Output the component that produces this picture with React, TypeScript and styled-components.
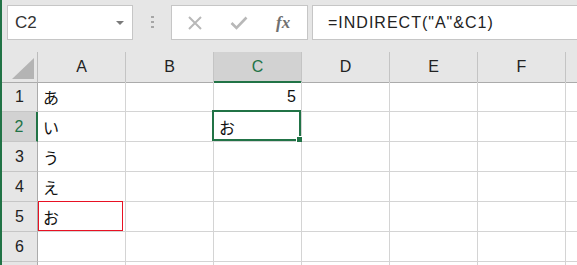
import React from "react";
import styled, { createGlobalStyle } from "styled-components";

const Global = createGlobalStyle`
  html, body { margin: 0; padding: 0; }
  body {
    width: 577px; height: 265px; overflow: hidden;
    background: #e6e6e6;
    font-family: "Liberation Sans", "Noto Sans CJK JP", sans-serif;
  }
`;

const GREEN = "#217346";

const Frame = styled.div`
  display: flex;
  width: 577px;
  height: 265px;
  overflow: hidden;
`;

const Strip = styled.div`
  width: 2px;
  flex: none;
  background: ${GREEN};
`;

const Main = styled.div`
  flex: 1;
  display: flex;
  flex-direction: column;
  min-width: 0;
`;

const Toolbar = styled.div`
  display: flex;
  align-items: flex-start;
  height: 52px;
  padding: 5px 0 0 5px;
  box-sizing: border-box;
  flex: none;
`;

const NameBox = styled.div`
  width: 126px;
  height: 35px;
  box-sizing: border-box;
  background: #fff;
  border: 1px solid #c6c6c6;
  display: flex;
  align-items: center;
  padding-left: 7px;
  position: relative;
  font-size: 17px;
  color: #333;
`;

const Caret = styled.span`
  position: absolute;
  right: 8px;
  top: 15px;
  width: 0;
  height: 0;
  border-left: 4px solid transparent;
  border-right: 4px solid transparent;
  border-top: 4px solid #7a7a7a;
`;

const Grip = styled.div`
  width: 38px;
  height: 35px;
  display: flex;
  flex-direction: column;
  align-items: center;
  gap: 3px;
  padding-top: 11px;
  box-sizing: border-box;
  flex: none;
`;

const Dot = styled.span`
  width: 3px;
  height: 2px;
  background: #a6a6a6;
`;

const FxBox = styled.div`
  width: 137px;
  height: 35px;
  box-sizing: border-box;
  background: #fff;
  border: 1px solid #c6c6c6;
  display: flex;
  align-items: center;
  padding-left: 15px;
  flex: none;
`;

const IconSlot = styled.span<{ $ml: number }>`
  display: flex;
  margin-left: ${(p) => p.$ml}px;
`;

const FxLabel = styled.span`
  font-family: "Liberation Serif", serif;
  font-style: italic;
  font-weight: bold;
  font-size: 17px;
  color: #707070;
  margin-left: 28px;
`;

const FormulaBox = styled.div`
  flex: 1;
  margin-left: 4px;
  height: 35px;
  box-sizing: border-box;
  background: #fff;
  border: 1px solid #c6c6c6;
  border-right: none;
  display: flex;
  align-items: center;
  padding-left: 15px;
  font-size: 16px;
  letter-spacing: 1px;
  color: #222;
  white-space: nowrap;
`;

const Sheet = styled.div`
  display: grid;
  grid-template-columns: 36px repeat(7, 88px);
  grid-auto-rows: 30px;
  background: #fff;
  flex: 1;
`;

const Corner = styled.div`
  height: 31px;
  box-sizing: border-box;
  background: #e6e6e6;
  border-right: 1px solid #bcbcbc;
  border-bottom: 1px solid #ababab;
  position: relative;
`;

const Triangle = styled.span`
  position: absolute;
  left: 10px;
  top: 6px;
  width: 0;
  height: 0;
  border-left: 22px solid transparent;
  border-bottom: 21px solid #b4b4b4;
`;

const ColHead = styled.div<{ $sel?: boolean }>`
  height: 31px;
  box-sizing: border-box;
  background: ${(p) => (p.$sel ? "#d2d2d2" : "#e6e6e6")};
  border-right: 1px solid #c4c4c4;
  border-bottom: ${(p) => (p.$sel ? `2px solid ${GREEN}` : "1px solid #ababab")};
  display: flex;
  align-items: center;
  justify-content: center;
  font-size: 16px;
  color: ${(p) => (p.$sel ? GREEN : "#222")};
  padding-top: ${(p) => (p.$sel ? "1px" : "0")};
`;

const RowHead = styled.div<{ $sel?: boolean }>`
  box-sizing: border-box;
  background: ${(p) => (p.$sel ? "#d2d2d2" : "#e6e6e6")};
  border-right: ${(p) => (p.$sel ? `2px solid ${GREEN}` : "1px solid #ababab")};
  border-bottom: 1px solid #c6c6c6;
  display: flex;
  align-items: center;
  justify-content: center;
  font-size: 16px;
  color: ${(p) => (p.$sel ? GREEN : "#222")};
`;

const Cell = styled.div<{ $right?: boolean }>`
  box-sizing: border-box;
  position: relative;
  border-right: 1px solid #d4d4d4;
  border-bottom: 1px solid #d4d4d4;
  display: flex;
  align-items: center;
  justify-content: ${(p) => (p.$right ? "flex-end" : "flex-start")};
  padding: 0 5px 0 5px;
  font-size: 16px;
  font-family: "Liberation Sans", "Noto Sans CJK JP", sans-serif;
  color: #111;
`;

const Active = styled.span`
  position: absolute;
  top: -2px;
  left: -2px;
  right: 0;
  bottom: 0;
  border: 2px solid ${GREEN};
  pointer-events: none;
`;

const Handle = styled.span`
  position: absolute;
  right: -3px;
  bottom: -3px;
  width: 5px;
  height: 5px;
  background: ${GREEN};
  border: 1px solid #fff;
  border-right: none;
  border-bottom: none;
`;

const Marked = styled.span`
  position: absolute;
  top: -1px;
  left: 0;
  width: 85px;
  bottom: 0;
  border: 1px solid #e81123;
  box-sizing: border-box;
  pointer-events: none;
`;

const cols = ["A", "B", "C", "D", "E", "F", ""];
const rows: Record<number, Record<number, string>> = {
  1: { 0: "あ", 2: "5" },
  2: { 0: "い", 2: "お" },
  3: { 0: "う" },
  4: { 0: "え" },
  5: { 0: "お" },
};

export default function App() {
  return (
    <>
      <Global />
      <Frame>
        <Strip />
        <Main>
          <Toolbar>
            <NameBox>
              C2
              <Caret />
            </NameBox>
            <Grip>
              <Dot />
              <Dot />
              <Dot />
            </Grip>
            <FxBox>
              <IconSlot $ml={0}>
                <svg width="16" height="16" viewBox="0 0 16 16">
                  <path d="M2 2 L14 14 M14 2 L2 14" stroke="#b8b8b8" strokeWidth="2" fill="none" />
                </svg>
              </IconSlot>
              <IconSlot $ml={27}>
                <svg width="18" height="14" viewBox="0 0 18 14">
                  <path d="M1.5 7 L6.5 12 L16.5 1.5" stroke="#b8b8b8" strokeWidth="2.6" fill="none" />
                </svg>
              </IconSlot>
              <FxLabel>fx</FxLabel>
            </FxBox>
            <FormulaBox>=INDIRECT("A"&amp;C1)</FormulaBox>
          </Toolbar>
          <Sheet>
            <Corner>
              <Triangle />
            </Corner>
            {cols.map((c, i) => (
              <ColHead key={i} $sel={c === "C"}>
                {c}
              </ColHead>
            ))}
            {[1, 2, 3, 4, 5, 6, 7].map((r) => (
              <React.Fragment key={r}>
                <RowHead $sel={r === 2}>{r < 7 ? r : ""}</RowHead>
                {cols.map((_, ci) => {
                  const v = rows[r]?.[ci] ?? "";
                  return (
                    <Cell key={ci} $right={r === 1 && ci === 2}>
                      {v}
                      {r === 2 && ci === 2 && (
                        <Active>
                          <Handle />
                        </Active>
                      )}
                      {r === 5 && ci === 0 && <Marked />}
                    </Cell>
                  );
                })}
              </React.Fragment>
            ))}
          </Sheet>
        </Main>
      </Frame>
    </>
  );
}
